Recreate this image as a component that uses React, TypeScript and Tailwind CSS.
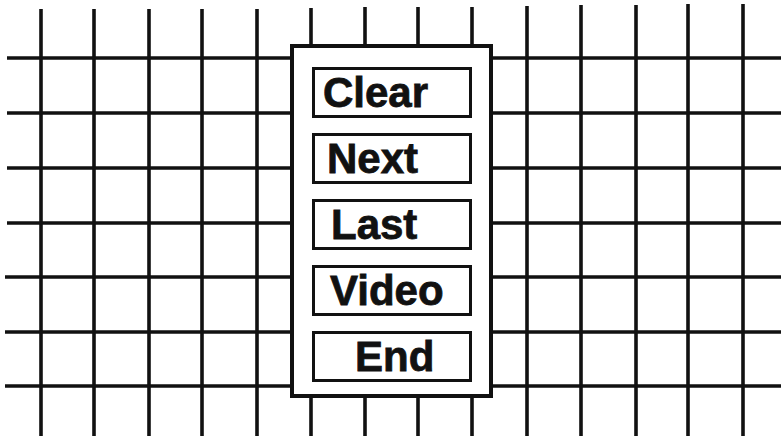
const columns = [
    { x: 41, top: 9 },
    { x: 94, top: 9 },
    { x: 149, top: 9 },
    { x: 202, top: 9 },
    { x: 257, top: 9 },
    { x: 311, top: 8 },
    { x: 365, top: 7 },
    { x: 418, top: 7 },
    { x: 472, top: 7 },
    { x: 527, top: 6 },
    { x: 581, top: 5 },
    { x: 636, top: 5 },
    { x: 688, top: 4 },
    { x: 743, top: 4 },
]

const rows = [58, 113, 168, 223, 277, 332, 386]

const menuItems = [
    { label: "Clear", pad: "pl-[8px]" },
    { label: "Next", pad: "pl-[12px]" },
    { label: "Last", pad: "pl-[16px]" },
    { label: "Video", pad: "pl-[15px]" },
    { label: "End", pad: "pl-[40px]" },
]

const Grid = () => {
    return (
        <svg
            className="absolute inset-0"
            width="781"
            height="439"
            viewBox="0 0 781 439"
        >
            {columns.map((c) => (
                <line
                    key={c.x}
                    x1={c.x}
                    y1={c.top}
                    x2={c.x}
                    y2={436}
                    stroke="#111111"
                    strokeWidth="3.6"
                />
            ))}
            {rows.map((y, i) => (
                <line
                    key={y}
                    x1={i > 3 ? 5 : 7}
                    y1={y}
                    x2={781}
                    y2={y}
                    stroke="#111111"
                    strokeWidth="3.6"
                />
            ))}
        </svg>
    )
}

const App = () => {
    return (
        <div className="relative h-[439px] w-[781px] overflow-hidden bg-white pl-[290px] pt-[44px]">
            <Grid />
            <div className="relative flex h-[354px] w-[203px] flex-col gap-[15px] border-4 border-[#111111] bg-white pl-[18px] pt-[19px]">
                {menuItems.map((item) => (
                    <button
                        key={item.label}
                        className={`h-[51px] w-[160px] border-[3px] border-[#111111] bg-white text-left text-[42px] font-bold leading-[45px] text-[#111111] [-webkit-text-stroke:0.8px_#111111] ${item.pad}`}
                        style={{ fontFamily: '"Liberation Sans", Arial, sans-serif' }}
                    >
                        {item.label}
                    </button>
                ))}
            </div>
        </div>
    )
}

export default App
